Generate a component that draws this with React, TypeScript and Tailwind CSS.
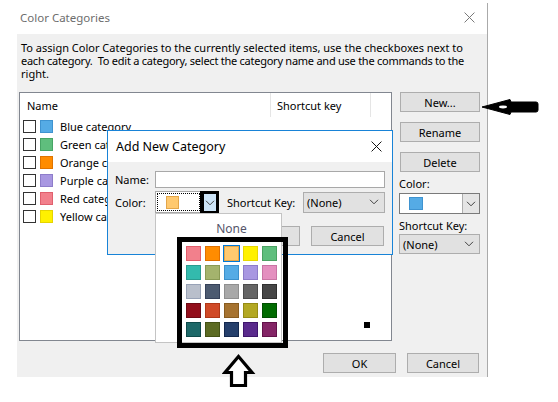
import React from 'react';

type Swatch = { fill: string; edge: string; selected?: boolean };

const CATEGORIES = [
  { name: 'Blue category', fill: '#55abe5', edge: '#3f93d0' },
  { name: 'Green category', fill: '#5fbe7d', edge: '#47a565' },
  { name: 'Orange category', fill: '#ff8c00', edge: '#e07400' },
  { name: 'Purple category', fill: '#a897e1', edge: '#8e7dca' },
  { name: 'Red category', fill: '#f2808c', edge: '#e0606e' },
  { name: 'Yellow category', fill: '#fff100', edge: '#e6d400' },
];

const PALETTE: Swatch[] = [
  { fill: '#f2808c', edge: '#e35d6a' },
  { fill: '#ff8c00', edge: '#e07000' },
  { fill: '#ffc96f', edge: '#e3a64a', selected: true },
  { fill: '#fff100', edge: '#e8d800' },
  { fill: '#5fbe7d', edge: '#4aa262' },
  { fill: '#33baad', edge: '#2a9c90' },
  { fill: '#a4b36d', edge: '#8a9a55' },
  { fill: '#55abe5', edge: '#3c90cc' },
  { fill: '#a897e1', edge: '#8d7cc8' },
  { fill: '#e48fbf', edge: '#c974a4' },
  { fill: '#b9bfcb', edge: '#98a2b6' },
  { fill: '#4c5a70', edge: '#36425a' },
  { fill: '#a8a8a8', edge: '#8f8f8f' },
  { fill: '#656565', edge: '#4c4c4c' },
  { fill: '#464646', edge: '#303030' },
  { fill: '#920e1b', edge: '#6e0a14' },
  { fill: '#d04a27', edge: '#b03818' },
  { fill: '#a67330', edge: '#885c20' },
  { fill: '#b3a823', edge: '#958b15' },
  { fill: '#006b00', edge: '#004f00' },
  { fill: '#1d6868', edge: '#0f4a4a' },
  { fill: '#5c6b23', edge: '#455216' },
  { fill: '#253f6b', edge: '#14284e' },
  { fill: '#5a2b8c', edge: '#40166c' },
  { fill: '#842566', edge: '#63124a' },
];

function Chevron() {
  return (
    <svg width="10" height="6" viewBox="0 0 10 6" fill="none">
      <path d="M1 0.8 L5 4.8 L9 0.8" stroke="#404040" strokeWidth="1" />
    </svg>
  );
}

function CloseX({ color, size }: { color: string; size: number }) {
  return (
    <svg width={size} height={size} viewBox="0 0 10 10" fill="none">
      <path d="M0.5 0.5 L9.5 9.5 M9.5 0.5 L0.5 9.5" stroke={color} strokeWidth="0.9" />
    </svg>
  );
}

function Button({ label, className }: { label: string; className: string }) {
  return (
    <div
      className={`flex items-center justify-center border border-[#adadad] bg-[#e1e1e1] text-black ${className}`}
    >
      {label}
    </div>
  );
}

export default function App() {
  return (
    <div className="relative w-[558px] h-[402px] overflow-hidden bg-white text-[11px] leading-[13px] text-black font-['Noto_Sans',sans-serif]">
      {/* main dialog */}
      <div className="mt-[3px] flex h-[374px] w-[488px] flex-col border-r border-[#aaaaaa]">
        <div className="-mt-[3px] flex h-[34px] shrink-0 items-center justify-between pl-[20px] pr-[12px]">
          <span className="text-[11.5px] text-[#6d6d6d]">Color Categories</span>
          <CloseX color="#777" size={11} />
        </div>

        <div className="ml-[17px] flex flex-1 flex-col bg-[#f0f0f0]">
          <div className="whitespace-nowrap pl-[4px] pt-[7px] leading-[13px]">
            <div>To assign Color Categories to the currently selected items, use the checkboxes next to</div>
            <div className="tracking-[-0.25px]">
              each category.&nbsp; To edit a category, select the category name and use the commands to the
            </div>
            <div>right.</div>
          </div>

          <div className="ml-[2px] mt-[12px] flex">
            {/* list */}
            <div className="h-[249px] w-[373px] border border-[#828790] bg-white">
              <div className="flex h-[24px] items-center">
                <div className="w-[250px] pl-[7px]">Name</div>
                <div className="h-[24px] w-px bg-[#e5e5e5]" />
                <div className="w-[99px] pl-[6px]">Shortcut key</div>
                <div className="h-[24px] w-px bg-[#e5e5e5]" />
              </div>
              {CATEGORIES.map((c) => (
                <div key={c.name} className="flex h-[18px] items-center pl-[3px]">
                  <div className="h-[13px] w-[13px] border border-[#333] bg-white" />
                  <div
                    className="ml-[4px] h-[13px] w-[13px] border"
                    style={{ backgroundColor: c.fill, borderColor: c.edge }}
                  />
                  <span className="ml-[7px] whitespace-nowrap">{c.name}</span>
                </div>
              ))}
            </div>

            {/* commands */}
            <div className="ml-[7px] flex w-[81px] flex-col">
              <Button label="New..." className="ml-[1px] h-[20px] w-[80px]" />
              <Button label="Rename" className="ml-[1px] mt-[10px] h-[20px] w-[80px]" />
              <Button label="Delete" className="ml-[1px] mt-[10px] h-[20px] w-[80px]" />
              <div className="mt-[5px]">Color:</div>
              <div className="mt-[3px] flex h-[21px] w-[81px] border border-[#7a7a7a] bg-white">
                <div className="flex flex-1 items-center pl-[9px]">
                  <div className="h-[13px] w-[14px] border border-[#3f93d0] bg-[#55abe5]" />
                </div>
                <div className="flex w-[17px] items-center justify-center border-l border-[#adadad] bg-[#e5e5e5]">
                  <Chevron />
                </div>
              </div>
              <div className="mt-[5px]">Shortcut Key:</div>
              <div className="mt-[2px] flex h-[20px] w-[81px] items-center justify-between border border-[#adadad] bg-[#e1e1e1] pl-[3px] pr-[5px]">
                <span>(None)</span>
                <Chevron />
              </div>
            </div>
          </div>

          <div className="mt-[12px] flex justify-end gap-[11px] pr-[8px]">
            <Button label="OK" className="h-[20px] w-[73px]" />
            <Button label="Cancel" className="h-[20px] w-[72px]" />
          </div>
        </div>
      </div>

      {/* Add New Category dialog */}
      <div className="absolute left-[107px] top-[130px] flex h-[125px] w-[286px] flex-col border border-[#1883d7] bg-[#f0f0f0]">
        <div className="flex h-[31px] shrink-0 items-center justify-between bg-white pl-[8px] pr-[10px]">
          <span className="text-[12.5px]">Add New Category</span>
          <CloseX color="#111" size={11} />
        </div>
        <div className="flex flex-col pl-[7px] pt-[9px]">
          <div className="flex h-[17px] items-center">
            <span className="w-[40px]">Name:</span>
            <div className="h-[17px] w-[230px] border border-[#a8a8a8] bg-white" />
          </div>
          <div className="mt-[3px] flex h-[22px] items-center">
            <span className="w-[40px]">Color:</span>
            <div className="flex h-[22px] w-[63px] border border-[#a8a8a8] bg-white">
              <div className="m-px flex w-[43px] items-center border border-dotted border-black pl-[8px]">
                <div className="h-[13px] w-[13px] border border-[#e3a64a] bg-[#ffc96f]" />
              </div>
            </div>
            <span className="ml-[9px] w-[76px] whitespace-nowrap">Shortcut Key:</span>
            <div className="flex h-[21px] w-[82px] items-center justify-between border border-[#adadad] bg-[#e1e1e1] pl-[3px] pr-[5px]">
              <span>(None)</span>
              <Chevron />
            </div>
          </div>
          <div className="mt-[13px] flex justify-end gap-[11px] pr-[8px]">
            <Button label="OK" className="h-[20px] w-[73px]" />
            <Button label="Cancel" className="h-[20px] w-[73px]" />
          </div>
        </div>
      </div>

      {/* highlighted drop button of the colour combo */}
      <div className="absolute left-[200px] top-[191px] flex h-[23px] w-[19px] items-center justify-center border-[3px] border-l-4 border-black bg-[#cce4f7]">
        <Chevron />
      </div>

      {/* colour picker popup */}
      <div className="absolute left-[155px] top-[213px] h-[130px] w-[127px] border border-[#c4c4c4] bg-white pl-[30px]">
        <div className="flex h-[28px] w-[91px] items-center justify-center text-[12px] text-[#55556a]">
          None
        </div>
        <div className="mt-[4px] grid w-[91px] grid-cols-5 gap-[4px]">
          {PALETTE.map((s, i) => (
            <div
              key={i}
              className={`h-[15px] w-[15px] border ${s.selected ? 'outline-1 outline-[#0078d7]' : ''}`}
              style={{ backgroundColor: s.fill, borderColor: s.edge }}
            />
          ))}
        </div>
      </div>

      {/* annotation: frame around palette */}
      <div className="pointer-events-none absolute left-[177px] top-[237px] h-[111px] w-[111px] border-[5px] border-black" />

      {/* annotation: small dot */}
      <div className="absolute left-[364px] top-[322px] h-[6px] w-[6px] bg-black" />

      {/* annotation: arrow to New... */}
      <svg className="absolute left-[480px] top-[97px]" width="60" height="20" viewBox="0 0 60 20">
        <path
          d="M2 10 L30 2.5 L31 5 L56 5 Q58 5 58 7 L58 13 Q58 15 56 15 L31 15 L30 17.5 Z"
          fill="#000"
          strokeLinejoin="round"
          stroke="#000"
          strokeWidth="1"
        />
        <ellipse cx="23" cy="10" rx="4" ry="1.4" fill="#fff" />
      </svg>

      {/* annotation: up arrow */}
      <svg className="absolute left-[222px] top-[353px]" width="34" height="36" viewBox="0 0 34 36">
        <path
          d="M16.5 3.5 L30 19.5 L23.5 19.5 L23.5 32.5 L9.5 32.5 L9.5 19.5 L3 19.5 Z"
          fill="#fff"
          stroke="#000"
          strokeWidth="3.2"
          strokeLinejoin="miter"
        />
      </svg>
    </div>
  );
}
